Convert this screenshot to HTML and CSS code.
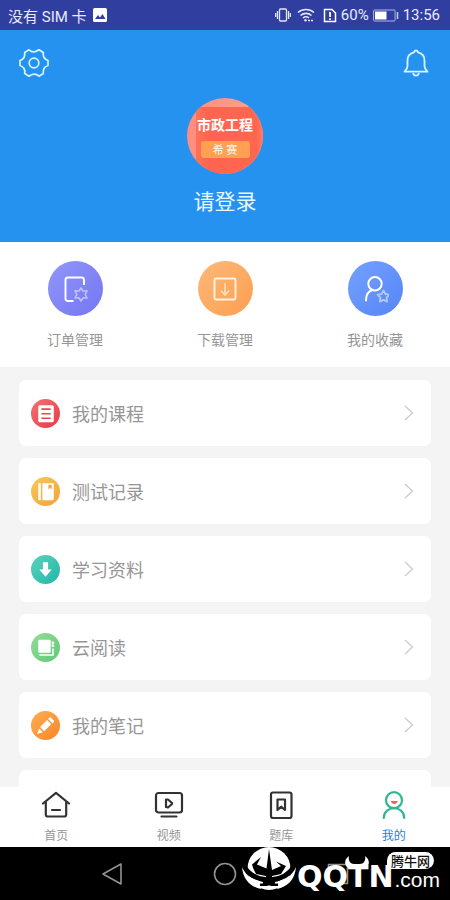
FILE: index.html
```html
<!DOCTYPE html>
<html lang="zh-CN">
<head>
<meta charset="utf-8">
<meta name="viewport" content="width=device-width, initial-scale=1">
<title>我的</title>
<link rel="stylesheet" href="styles.css">
</head>
<body>
<div class="status">
  <div class="status-group">
    <span>没有 SIM 卡</span>
    <svg width="16" height="16" viewBox="0 0 16 16"><rect x="1" y="1" width="14" height="14" rx="1.500" fill="#fff"/><path d="M3 12l3-4 2 2.500 2.500-3.500 3 5z" fill="#303f9f"/></svg>
  </div>
  <div class="status-group status-right">
    <svg width="16" height="14" viewBox="0 0 16 14" fill="none" stroke="#e4e7fb" stroke-width="1.300"><rect x="4.500" y="1" width="7" height="12" rx="1"/><path d="M2.500 3v8M.7 5v4M13.500 3v8M15.300 5v4"/></svg>
    <svg class="wifi" width="18" height="14" viewBox="0 0 18 14" fill="none" stroke="#e4e7fb" stroke-width="1.600"><path d="M1 4.500c4.500-4 11.500-4 16 0M3.500 7.500c3.200-2.800 7.800-2.800 11 0M6 10c2-1.700 4-1.700 6 0"/><circle cx="8.500" cy="12.300" r="1.200" fill="#e4e7fb" stroke="none"/><path d="M11 12.500h5" stroke-dasharray="2 1"/></svg>
    <svg width="14" height="15" viewBox="0 0 14 15" fill="none" stroke="#fff" stroke-width="1.500"><path d="M1.500 1.500h7.500l3.500 3.500v8.500h-11z"/><path d="M7 4v5M7 10.200v1.800" stroke-width="1.800"/></svg>
    <span>60%</span>
    <svg width="26" height="13" viewBox="0 0 26 13"><rect x=".6" y="1" width="21.500" height="11" rx="1" fill="none" stroke="#aeb5ea"/><rect x="2" y="2.500" width="11.500" height="8" fill="#fff"/><path d="M24.500 3v7" stroke="#c5caf0" stroke-width="1.500"/></svg>
    <span>13:56</span>
  </div>
</div>

<header class="profile">
  <div class="profile-bar">
    <button class="icon-button" aria-label="设置"><svg width="32" height="32" viewBox="0 0 32 32" fill="none" stroke="#d5f5ff" stroke-width="1.700" stroke-linejoin="round"><path d="M11 2.800Q13.500 5 16 4.800T21 2.800L25.300 5.500Q24.800 8.500 26 10.500T30 13.500V18.500Q27 19.500 26 21.500T25.300 26.500L21 29.200Q18.500 27 16 27.200T11 29.200L6.700 26.500Q7.200 23.500 6 21.500T2 18.500V13.500Q5 12.500 6 10.500T6.700 5.500Z"/><circle cx="16" cy="16" r="4.800"/></svg></button>
    <button class="icon-button" aria-label="通知"><svg width="32" height="32" viewBox="0 0 32 32" fill="none" stroke="#d5f5ff" stroke-width="1.800" stroke-linejoin="round"><path d="M16 3.500c-1.200 0-1.800.8-2 1.800-4 1-6.500 4-6.500 8V19c0 2.500-1.500 4-3 5.700h23c-1.500-1.700-3-3.200-3-5.700v-5.700c0-4-2.500-7-6.500-8-.2-1-.8-1.800-2-1.800z"/><path d="M13.200 26c.2 3.500 5.400 3.500 5.600 0"/></svg></button>
  </div>
  <div class="avatar"><div class="avatar-panel"><span class="avatar-title">市政工程</span><span class="avatar-tag">希 赛</span></div></div>
  <a class="login" href="#login">请登录</a>
</header>

<nav class="shortcuts" aria-label="快捷入口">
  <a class="shortcut" href="#orders">
    <span class="bubble violet"><svg width="28" height="28" viewBox="0 0 28 28" fill="none" stroke="#fff" stroke-width="1.900"><path d="M12.500 26H7q-2.500 0-2.500-2.500V5Q4.500 2.500 7 2.500h13.500q2.500 0 2.500 2.500v5"/><path d="M20 13l2 3 4-.2-1.800 3.500L26 23l-4-.2-2 3.200-2-3.200-4 .2 1.800-3.700L14 15.800l4 .2z" stroke="#bfc1ff" stroke-width="1.600" stroke-linejoin="round"/></svg></span>
    <span>订单管理</span>
  </a>
  <a class="shortcut" href="#downloads">
    <span class="bubble orange"><svg width="28" height="28" viewBox="0 0 28 28" fill="none" stroke="#fff2df" stroke-width="1.900"><rect x="3.500" y="3.500" width="21" height="21" rx="1.500"/><path d="M14 8v12M9.800 15.500L14 20l4.200-4.500" stroke="#ffe0bd" stroke-width="1.600"/></svg></span>
    <span>下载管理</span>
  </a>
  <a class="shortcut" href="#favorites">
    <span class="bubble blue"><svg width="28" height="28" viewBox="0 0 28 28" fill="none" stroke="#fff" stroke-width="2" stroke-linecap="round"><circle cx="14" cy="8.700" r="6.700"/><path d="M5 25.500c0-6 2.500-9.500 7-10.500"/><path d="M22.500 15.500l1.900 3.500 4 .7-2.800 2.900.5 4-3.600-1.700-3.600 1.700.5-4-2.800-2.900 4-.7z" stroke="#b0caff" stroke-width="1.800" stroke-linejoin="round"/></svg></span>
    <span>我的收藏</span>
  </a>
</nav>

<main class="list">
  <a class="row" href="#courses"><span class="dot red"><svg viewBox="0 0 28 28"><rect x="7" y="6" width="15" height="16.500" rx="1.500" fill="#fff"/><path d="M10 9.800h9M10 14.200h9M10 18.600h9" stroke="#e8484e" stroke-width="1.500"/></svg></span><span class="row-name">我的课程</span><svg class="chevron" viewBox="0 0 10 16"><path d="M1 1l7.500 7L1 15"/></svg></a>
  <a class="row" href="#tests"><span class="dot yellow"><svg viewBox="0 0 28 28" fill="#fff"><path d="M7 6h2.500v16.500H8q-1 0-1-1zM11 6h10q1 0 1 1v14.500q0 1-1 1H11z"/><path d="M16.800 7.500h3.200v4.500l-1.600-1.300-1.600 1.300z" fill="#f5a83c"/></svg></span><span class="row-name">测试记录</span><svg class="chevron" viewBox="0 0 10 16"><path d="M1 1l7.500 7L1 15"/></svg></a>
  <a class="row" href="#materials"><span class="dot teal"><svg viewBox="0 0 28 28" fill="#fff"><path d="M11.500 7h5v7h3.500l-6 7-6-7h3.500z"/></svg></span><span class="row-name">学习资料</span><svg class="chevron" viewBox="0 0 10 16"><path d="M1 1l7.500 7L1 15"/></svg></a>
  <a class="row" href="#reading"><span class="dot green"><svg viewBox="0 0 28 28" fill="#fff"><rect x="7" y="6.500" width="12" height="12.500" rx="1"/><path d="M8 21.300h13.200V15M20.800 8v5.500M20 9.500h2.500M20 12.500h2.500" fill="none" stroke="#fff" stroke-width="1.500"/></svg></span><span class="row-name">云阅读</span><svg class="chevron" viewBox="0 0 10 16"><path d="M1 1l7.500 7L1 15"/></svg></a>
  <a class="row" href="#notes"><span class="dot amber"><svg viewBox="0 0 28 28" fill="#fff"><path d="M8.700 15.500l6.800-6.800 4 4-6.800 6.800zM16.500 7.700l1.200-1.200q.8-.8 1.600 0l2.700 2.700q.8.800 0 1.600l-1.200 1.200zM7.800 16.800l3.700 3.700L6 22.200z"/></svg></span><span class="row-name">我的笔记</span><svg class="chevron" viewBox="0 0 10 16"><path d="M1 1l7.500 7L1 15"/></svg></a>
  <div class="row"></div>
</main>

<nav class="tabs" aria-label="主导航">
  <a class="tab" href="#home"><svg width="30" height="30" viewBox="0 0 30 30"><path d="M2 13.500L15 2.800l13 10.700M4.800 12v12.500q0 2 2 2h16.400q2 0 2-2V12M11 20h8"/></svg><span>首页</span></a>
  <a class="tab" href="#video"><svg width="30" height="30" viewBox="0 0 30 30"><rect x="2" y="3" width="26" height="19.500" rx="2.500"/><path d="M7.500 26.500h15M12 9.500v7.500l2 .5 4-3.500v-1l-4-3.500z"/></svg><span>视频</span></a>
  <a class="tab" href="#questions"><svg width="30" height="30" viewBox="0 0 30 30"><rect x="5" y="2.500" width="20.500" height="25.500" rx="2"/><path d="M11.500 9.500h7.500v10.500l-3.700-3.300-3.800 3.300z"/></svg><span>题库</span></a>
  <a class="tab active" href="#mine"><svg width="30" height="30" viewBox="0 0 30 30"><circle cx="15" cy="10.200" r="8"/><path d="M4.800 28c0-13 20.400-13 20.400 0"/><path class="smile" d="M12 11h6.500c-.3 4-6.200 4-6.500 0z"/></svg><span>我的</span></a>
</nav>

<footer class="system">
  <button aria-label="返回"><svg width="24" height="24" viewBox="0 0 24 24"><path d="M21 2v20L3 12z"/></svg></button>
  <button aria-label="主屏幕"><svg width="24" height="24" viewBox="0 0 24 24"><circle cx="12" cy="12" r="10.500"/></svg></button>
  <button aria-label="最近任务"><svg width="24" height="24" viewBox="0 0 24 24"><rect x="2.500" y="2.500" width="19" height="19"/></svg></button>
  <div class="brand">
    <svg class="globe" width="54" height="44" viewBox="0 0 54 44"><circle cx="27" cy="21.500" r="21.500" fill="#fff"/><path d="M27 2l3 21 9-4-5-4.500 10 4.500-5 8-9 2 .5 9.500h-7l.5-9.500-10-2-2.500-5-1.500-4.500 9-7.500-4 7.500 9.500 4z" fill="#000"/><path d="M2 20c6 9 14 12 21 12.500v4h-5M52 20c-6 9-14 12-21 12.500v4h5" fill="none" stroke="#000" stroke-width="5"/><path d="M0 20c4 9 11 13 21 15v1.500h-4l2 5.500C9 40 1 33 0 20zM54 20c-4 9-11 13-21 15v1.500h4l-2 5.500c10-2 18-9 19-22z" fill="#fff"/></svg>
    <span class="brand-name">QQTN</span><span class="brand-domain">.com</span>
    <svg class="horns" width="24" height="14" viewBox="0 0 24 14"><path d="M4 0C-2 4-1 12 7 13h10c8-1 9-9 3-13 1 4-1 8-5 8H9C5 8 3 4 4 0z" fill="#fff"/></svg>
    <span class="brand-tip">腾牛网</span>
  </div>
</footer>
</body>
</html>
```

FILE: styles.css
```css
* { box-sizing: border-box; }
body {
  margin: 0;
  height: 100vh;
  display: flex;
  flex-direction: column;
  overflow: hidden;
  background: #f4f4f4;
  color: #969696;
  font-family: "Noto Sans CJK SC", sans-serif;
}
a { color: inherit; text-decoration: none; }
button { border: 0; padding: 0; background: none; display: grid; place-items: center; }
svg { display: block; flex: none; }

.status {
  flex: none;
  height: 30px;
  padding: 0 10px 0 8px;
  display: flex;
  align-items: center;
  justify-content: space-between;
  background: #303f9f;
  color: #e8eafc;
  font-family: Roboto, "Noto Sans CJK SC", sans-serif;
  font-size: 15px;
}
.status-group { display: flex; align-items: center; gap: 5px; }
.status-right { gap: 4px; }
.wifi { margin: 0 4px 0 2px; }

.profile {
  flex: none;
  height: 212px;
  display: flex;
  flex-direction: column;
  align-items: center;
  background: #2692f0;
}
.profile-bar {
  width: 100%;
  height: 68px;
  padding: 0 18px 2px;
  display: flex;
  align-items: center;
  justify-content: space-between;
}
.avatar {
  width: 76px;
  height: 76px;
  border-radius: 50%;
  overflow: hidden;
  padding: 9px 0 0 9px;
  background: linear-gradient(90deg, #ff8d7e, #ffa18f);
}
.avatar-panel {
  width: 100%;
  height: 100%;
  padding: 7px 9px 0 0;
  display: flex;
  flex-direction: column;
  align-items: center;
  gap: 7px;
  background: linear-gradient(90deg, #ff7257, #ff6450 20%, #ff6650 90%, #ff7c65);
  color: #fff;
}
.avatar-title { font-size: 14px; line-height: 20px; font-weight: 700; white-space: nowrap; }
.avatar-tag {
  width: 49px;
  border-radius: 3px;
  background: #ffa052;
  color: #ffeede;
  text-align: center;
  font-size: 11px;
  line-height: 17px;
  font-weight: 500;
}
.login { margin-top: 10px; font-size: 21px; line-height: 32px; color: #e6f8ff; }

.shortcuts {
  flex: none;
  height: 125px;
  padding-top: 19px;
  display: grid;
  grid-template-columns: repeat(3, 1fr);
  background: #fff;
}
.shortcut {
  display: flex;
  flex-direction: column;
  align-items: center;
  gap: 13px;
  font-size: 14px;
  line-height: 20px;
}
.bubble { width: 55px; height: 55px; border-radius: 50%; display: grid; place-items: center; }
.violet { background: linear-gradient(135deg, #9296fa, #7376f2); }
.orange { background: linear-gradient(135deg, #ffb878, #fc9f50); }
.blue { background: linear-gradient(135deg, #74a2ff, #5684f5); }

.list {
  flex: 1;
  min-height: 0;
  overflow: hidden;
  padding: 13px 19px 0;
  display: flex;
  flex-direction: column;
  gap: 12px;
}
.row {
  flex: none;
  height: 66px;
  padding: 0 17px 0 12px;
  display: flex;
  align-items: center;
  gap: 12px;
  border-radius: 7px;
  background: #fff;
}
.row-name { flex: 1; font-size: 18px; line-height: 26px; }
.dot { width: 29px; height: 29px; border-radius: 50%; }
.red { background: linear-gradient(135deg, #f47272, #e83944); }
.yellow { background: linear-gradient(135deg, #f8c85c, #f2a235); }
.teal { background: linear-gradient(135deg, #5dd2bd, #22b6a7); }
.green { background: linear-gradient(135deg, #96dc9a, #60c878); }
.amber { background: linear-gradient(135deg, #ffae55, #fa8524); }
.chevron { width: 10px; height: 16px; fill: none; stroke: #ccc; stroke-width: 1.3; }

.tabs {
  flex: none;
  height: 60px;
  padding-top: 3px;
  display: grid;
  grid-template-columns: repeat(4, 1fr);
  background: #fff;
}
.tab {
  display: flex;
  flex-direction: column;
  align-items: center;
  gap: 6px;
  font-size: 12px;
  line-height: 18px;
}
.tab svg { fill: none; stroke: #323232; stroke-width: 2.2; stroke-linejoin: round; stroke-linecap: round; }
.active { color: #2580dc; }
.active svg { stroke: #35b597; }
.tab .smile { fill: #f06450; stroke: none; }

.system {
  position: relative;
  flex: none;
  height: 53px;
  padding: 0 56px;
  display: grid;
  grid-template-columns: repeat(3, 1fr);
  background: #000;
}
.system button svg { fill: none; stroke: #929292; stroke-width: 1.6; stroke-linejoin: round; }
.brand {
  position: absolute;
  right: 10px;
  top: 0;
  height: 44px;
  display: flex;
  align-items: flex-end;
  gap: 1px;
  color: #fff;
}
.brand-name { font-family: "DejaVu Sans", sans-serif; font-weight: 700; font-size: 30px; line-height: 28px; }
.brand-domain { font-family: "Liberation Sans", sans-serif; font-size: 21px; line-height: 22px; }
.horns { position: absolute; right: 71px; top: 9px; }
.brand-tip {
  position: absolute;
  right: 6px;
  top: 5px;
  padding: 0 4px;
  border-radius: 9px 9px 9px 2px;
  background: #fff;
  color: #111;
  font-size: 13px;
  line-height: 17px;
  font-weight: 500;
}
```
